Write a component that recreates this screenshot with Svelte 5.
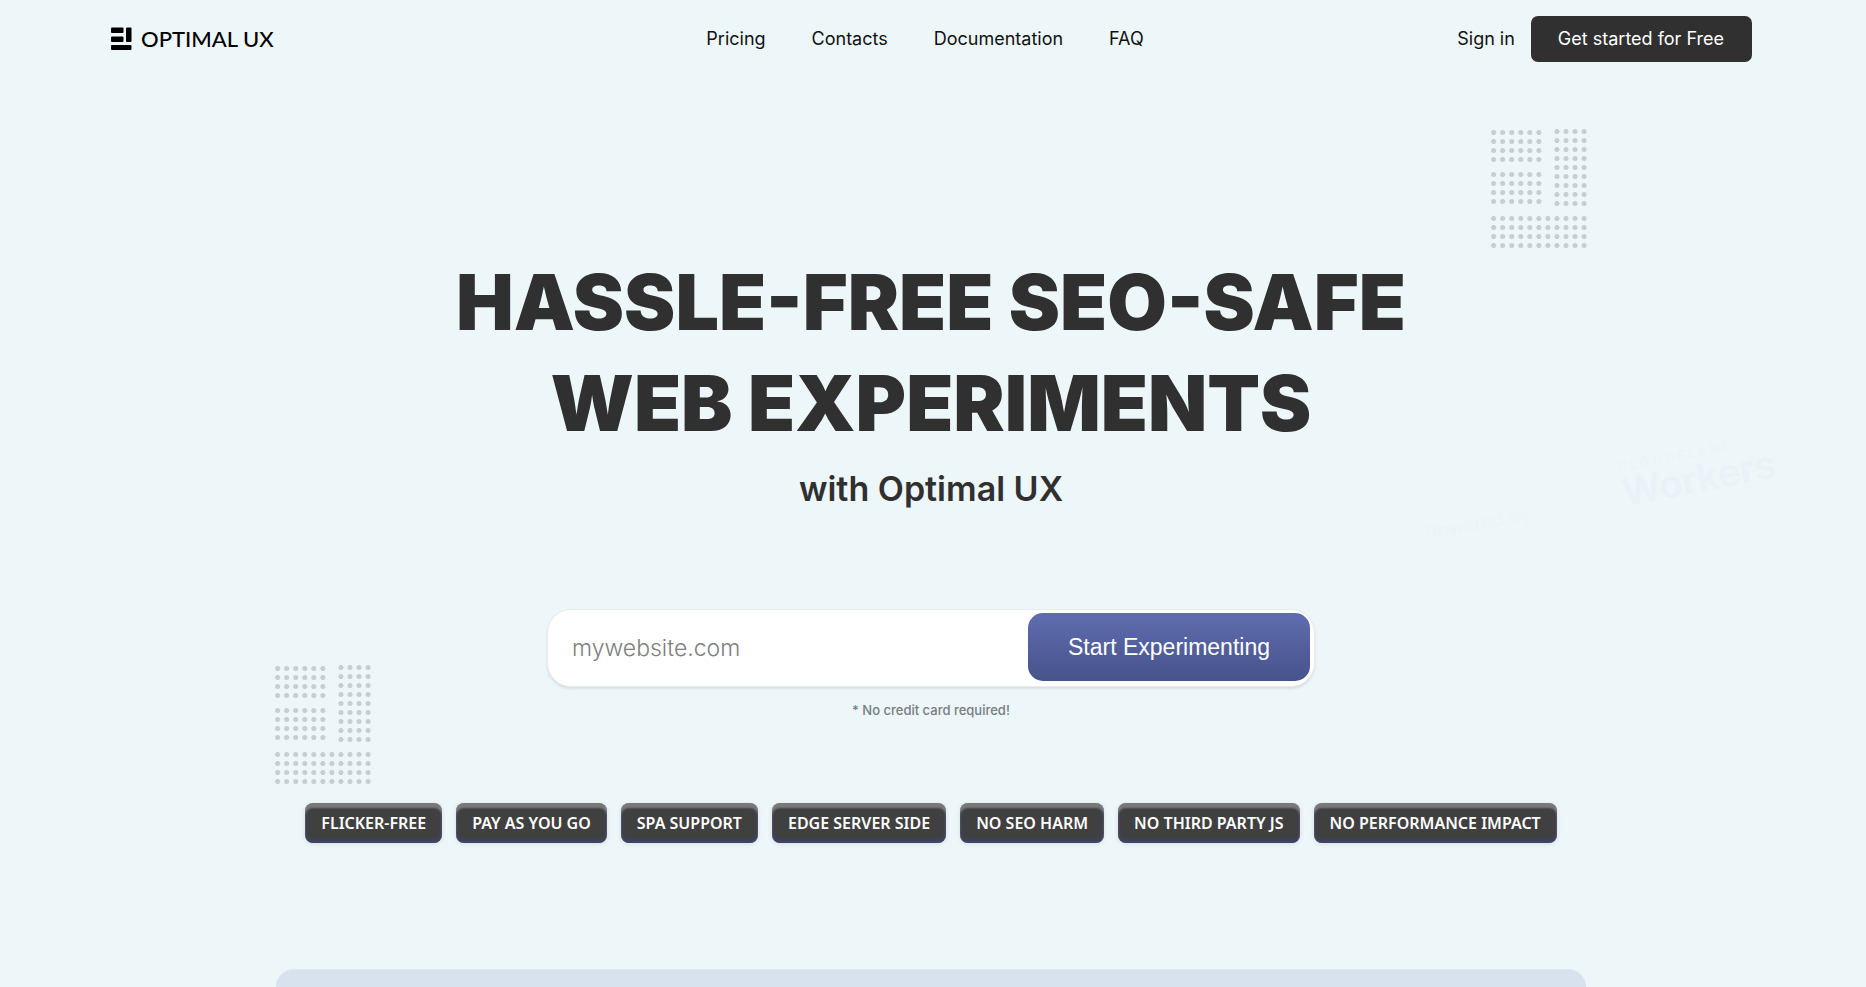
<script>
  const links = ['Pricing', 'Contacts', 'Documentation', 'FAQ'];
  const features = [
    'Flicker-free',
    'Pay as you go',
    'SPA support',
    'Edge server side',
    'No SEO harm',
    'No third party JS',
    'No performance impact'
  ];

  // Dotted version of the logo: two small bars, one tall bar, one wide base
  const bars = [
    { col: 0, cols: 6, rows: 4, top: 4.5 },
    { col: 0, cols: 6, rows: 4, top: 46.5 },
    { col: 7, cols: 4, rows: 9, top: 3.5 },
    { col: 0, cols: 11, rows: 4, top: 90.5 }
  ];
  const dots = bars.flatMap((b) =>
    Array.from({ length: b.cols * b.rows }, (_, i) => ({
      x: 2.6 + (b.col + (i % b.cols)) * 9.05,
      y: b.top + Math.floor(i / b.cols) * 9
    }))
  );
  let site = $state('');
</script>

{#snippet dotted(side)}
  <svg class="dots {side}" viewBox="0 0 96 120" aria-hidden="true">
    {#each dots as d}
      <circle cx={d.x} cy={d.y} r="2.5" />
    {/each}
  </svg>
{/snippet}

<div class="page">
  <header>
    <a class="brand" href="#home">
      <svg viewBox="0 0 22 24" aria-hidden="true">
        <rect x="1" y="0.5" width="12.5" height="5.5" rx="1" />
        <rect x="1" y="9.5" width="12.5" height="5.5" rx="1" />
        <rect x="16" y="0.5" width="5.5" height="14.5" rx="1" />
        <rect x="1" y="18" width="20.5" height="5" rx="1" />
      </svg>
      <span>OPTIMAL UX</span>
    </a>
    <nav>
      {#each links as l}
        <a href="#{l.toLowerCase()}">{l}</a>
      {/each}
    </nav>
    <div class="account">
      <a href="#signin">Sign in</a>
      <a class="cta" href="#start">Get started for Free</a>
    </div>
  </header>

  <main>
    {@render dotted('right')}
    {@render dotted('left')}
    <div class="mark powered" aria-hidden="true">Powered by</div>
    <div class="mark workers" aria-hidden="true"><small>CLOUDFLARE</small>Workers</div>

    <h1>HASSLE-FREE SEO-SAFE<br />WEB EXPERIMENTS</h1>
    <p class="sub">with Optimal UX</p>

    <form onsubmit={(e) => e.preventDefault()}>
      <input type="text" aria-label="Website address" placeholder="mywebsite.com" bind:value={site} />
      <button type="submit">Start Experimenting</button>
    </form>
    <p class="note">* No credit card required!</p>

    <ul>
      {#each features as f}
        <li>{f}</li>
      {/each}
    </ul>
    <section class="panel" aria-label="Preview"></section>
  </main>
</div>

<style>
  :global(body) {
    margin: 0;
    background: #edf6f9;
  }
  .page {
    box-sizing: border-box;
    min-height: 100vh;
    padding-right: 4px;
    display: flex;
    flex-direction: column;
    overflow: hidden;
    color: #111;
    font: 18px/24px Inter, sans-serif;
  }
  a {
    color: inherit;
    text-decoration: none;
  }
  header {
    box-sizing: border-box;
    width: 100%;
    max-width: 1642px;
    height: 78px;
    margin: 0 auto;
    display: grid;
    grid-template-columns: 1fr auto 1fr;
    align-items: center;
  }
  .brand {
    display: flex;
    align-items: center;
    gap: 9px;
    color: #000;
    font: 500 22px/24px Lato, sans-serif;
  }
  .brand svg {
    width: 22px;
    height: 24px;
  }
  nav {
    display: flex;
    gap: 46px;
    padding-right: 12px;
  }
  .account {
    display: flex;
    justify-content: flex-end;
    align-items: center;
    gap: 16px;
  }
  .cta {
    padding: 11px 28px 11px 27px;
    border-radius: 7px;
    background: #303030;
    color: #fff;
  }
  main {
    position: relative;
    flex: 1;
    width: 100%;
    max-width: 1310px;
    margin: 0 auto;
    display: flex;
    flex-direction: column;
    align-items: center;
  }
  .dots {
    position: absolute;
    width: 96px;
    height: 120px;
    fill: #c5ced3;
  }
  .dots.right {
    top: 50px;
    right: -1px;
  }
  .dots.left {
    top: 586px;
    left: -1px;
  }
  .mark {
    position: absolute;
    color: #e9f3f7;
    transform: rotate(-11deg);
    white-space: nowrap;
  }
  .powered {
    top: 434px;
    left: 1149px;
    color: #ebf4f8;
    font-size: 19px;
  }
  .workers {
    top: 368px;
    left: 1344px;
    font-size: 38px;
    line-height: 38px;
    font-weight: 600;
  }
  .workers small {
    display: block;
    color: #ebf4f8;
    font-size: 13px;
    line-height: 13px;
    letter-spacing: 3px;
  }
  h1 {
    margin: 174px 0 0;
    color: #303030;
    font: 900 77px/101px Inter, sans-serif;
    text-align: center;
  }
  .sub {
    margin: 12px 0 0;
    color: #303030;
    font: 600 34px/46px Inter, sans-serif;
  }
  form {
    box-sizing: border-box;
    width: 768px;
    max-width: 100%;
    margin-top: 97px;
    padding: 3px 4px 5px 0;
    border: 1px solid #e9ecee;
    border-radius: 24px;
    display: flex;
    background: #fff;
    box-shadow: 0 2px 3px #00000018;
  }
  input {
    flex: 1;
    min-width: 0;
    padding: 2px 24px 0;
    border: 0;
    outline: 0;
    background: transparent;
    color: #303030;
    font: 300 23px/28px Inter, sans-serif;
  }
  input::placeholder {
    color: #808080;
    opacity: 1;
  }
  button {
    width: 282px;
    height: 68px;
    border: 0;
    border-radius: 15px;
    background: linear-gradient(#5f6caf, #47538a);
    color: #fff;
    font: 23px/28px 'Liberation Sans', Arial, sans-serif;
  }
  .note {
    margin: 13px 0 0;
    color: #777c83;
    font-size: 13px;
    font-weight: 500;
    line-height: 20px;
  }
  ul {
    margin: 83px 0 0;
    padding: 0;
    display: flex;
    gap: 14px;
    list-style: none;
  }
  li {
    padding: 8px 16px;
    border-radius: 8px;
    background: #404040;
    box-shadow:
      inset 0 5px 2px #ffffff4d,
      inset 0 -3px 4px #3c4a8a99,
      0 1px 5px #0000001a;
    color: #fff;
    font: 600 16px/24px 'Noto Sans', sans-serif;
    text-transform: uppercase;
    white-space: nowrap;
  }
  .panel {
    box-sizing: border-box;
    flex: 1;
    width: 100%;
    margin-top: 126px;
    border-top: 1px solid #dce7f0;
    border-radius: 24px 24px 0 0;
    background: #d7e2ee;
  }
</style>
